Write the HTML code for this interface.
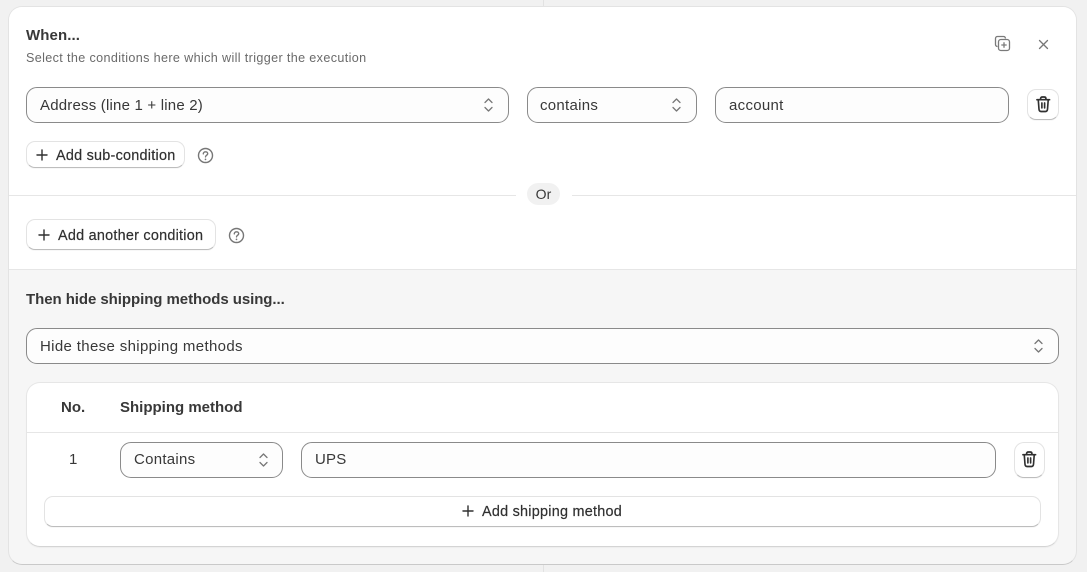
<!DOCTYPE html>
<html><head><meta charset="utf-8"><style>
*{box-sizing:border-box}
html,body{margin:0;padding:0}
body{width:1087px;height:572px;background:#f1f1f1;position:relative;overflow:hidden;font-family:"Liberation Sans",sans-serif;color:#383838;font-size:15px}
#w{position:absolute;left:0;top:0;width:1087px;height:572px;filter:blur(.35px)}
.a{position:absolute}
.t{position:absolute;white-space:nowrap;line-height:18px}
.inp{position:absolute;border:1px solid #8a8a8a;border-radius:11px;background:#fdfdfd}
.btn{position:absolute;background:#fff;border:1px solid #e3e3e3;border-bottom-color:#bdbdbd;border-radius:9px;box-shadow:0 1px 0 rgba(0,0,0,.03)}
svg{position:absolute;overflow:visible}
.b{font-weight:700;font-size:15px}
.m{font-size:14.4px;letter-spacing:.25px;-webkit-text-stroke:.2px #303030;color:#303030}
</style></head><body><div id="w">
<div class="a" style="left:543px;top:0;width:1px;height:7px;background:#e2e2e2"></div>
<div class="a" style="left:543px;top:565px;width:1px;height:7px;background:#e2e2e2"></div>

<div class="a" style="left:8px;top:6px;width:1069px;height:559px;background:#f6f6f6;border:1px solid #e3e3e3;border-bottom-color:#c9c9c9;border-radius:14px;overflow:hidden">
  <div class="a" style="left:0;top:0;width:1067px;height:263px;background:#fff;border-bottom:1px solid #e6e6e6"></div>
</div>

<div class="t b" style="left:26px;top:27px;letter-spacing:.1px">When...</div>
<div class="t" style="left:26px;top:49px;font-size:12.6px;letter-spacing:.36px;color:#6a6a6a">Select the conditions here which will trigger the execution</div>

<svg style="left:994px;top:35px" width="17" height="17" viewBox="0 0 17 17" fill="none" stroke="#7a7a7a" stroke-width="1.3"><path d="M3.5 11.5C2 11.3 1.5 10.5 1.5 9.5V3.5C1.5 2.3 2.3 1.5 3.5 1.5H9.5C10.5 1.5 11.3 2 11.5 3.5"/><rect x="4.5" y="4.5" width="11" height="11" rx="2.4"/><path d="M10 7.3V12.7M7.3 10H12.7"/></svg>
<svg style="left:1039px;top:40px" width="9" height="9" viewBox="0 0 9 9" fill="none" stroke="#777" stroke-width="1.3" stroke-linecap="round"><path d="M.5 .5L8.5 8.5M8.5 .5L.5 8.5"/></svg>

<div class="inp" style="left:26px;top:87px;width:483px;height:36px"></div>
<div class="t" style="left:40px;top:97px;letter-spacing:.2px">Address (line 1 + line 2)</div>
<svg style="left:483px;top:97px" width="11" height="16" viewBox="0 0 11 16" fill="none" stroke="#777" stroke-width="1.3" stroke-linecap="round" stroke-linejoin="round"><path d="M2 5.5L5.5 2L9 5.5M2 10.5L5.5 14L9 10.5"/></svg>

<div class="inp" style="left:527px;top:87px;width:170px;height:36px"></div>
<div class="t" style="left:540px;top:97px;letter-spacing:.28px">contains</div>
<svg style="left:671px;top:97px" width="11" height="16" viewBox="0 0 11 16" fill="none" stroke="#777" stroke-width="1.3" stroke-linecap="round" stroke-linejoin="round"><path d="M2 5.5L5.5 2L9 5.5M2 10.5L5.5 14L9 10.5"/></svg>

<div class="inp" style="left:715px;top:87px;width:294px;height:36px"></div>
<div class="t" style="left:729px;top:97px;letter-spacing:.3px">account</div>

<div class="btn" style="left:1027px;top:89px;width:32px;height:31px"></div>
<svg style="left:1036px;top:96px" width="14.5" height="16.5" viewBox="0 0 16 18" fill="none" stroke="#303030" stroke-width="1.8" stroke-linecap="round" stroke-linejoin="round"><path d="M1 4H15M5 4V3C5 1.8 5.8 1 7 1H9C10.2 1 11 1.8 11 3V4M2.5 4L3.3 14.5C3.4 16 4.2 17 5.6 17H10.4C11.8 17 12.6 16 12.7 14.5L13.5 4M6.5 7.5V13M9.5 7.5V13"/></svg>

<div class="btn" style="left:26px;top:141px;width:159px;height:27px"></div>
<svg style="left:36px;top:149px" width="12" height="12" viewBox="0 0 12 12" stroke="#303030" stroke-width="1.4" stroke-linecap="round"><path d="M6 1V11M1 6H11"/></svg>
<div class="t m" style="left:56px;top:147px">Add sub-condition</div>
<svg style="left:197px;top:147px" width="17" height="17" viewBox="0 0 17 17" fill="none" stroke="#777" stroke-width="1.4" stroke-linecap="round"><circle cx="8.5" cy="8.5" r="7"/><path d="M6.3 6.9C6.3 5.6 7.3 4.8 8.5 4.8C9.8 4.8 10.7 5.6 10.7 6.7C10.7 8.2 8.5 8.2 8.5 9.9"/><path d="M8.5 12.3V12.4" stroke-width="1.7"/></svg>

<div class="a" style="left:9px;top:195px;width:507px;height:1px;background:#e6e6e6"></div>
<div class="a" style="left:572px;top:195px;width:504px;height:1px;background:#e6e6e6"></div>
<div class="a" style="left:527px;top:183px;width:33px;height:22px;border-radius:11px;background:#f1f1f1"></div>
<div class="t" style="left:527px;top:185px;width:33px;text-align:center;font-size:14px;letter-spacing:.1px">Or</div>

<div class="btn" style="left:26px;top:219px;width:190px;height:31px"></div>
<svg style="left:38px;top:229px" width="12" height="12" viewBox="0 0 12 12" stroke="#303030" stroke-width="1.4" stroke-linecap="round"><path d="M6 1V11M1 6H11"/></svg>
<div class="t m" style="left:58px;top:227px">Add another condition</div>
<svg style="left:228px;top:227px" width="17" height="17" viewBox="0 0 17 17" fill="none" stroke="#777" stroke-width="1.4" stroke-linecap="round"><circle cx="8.5" cy="8.5" r="7"/><path d="M6.3 6.9C6.3 5.6 7.3 4.8 8.5 4.8C9.8 4.8 10.7 5.6 10.7 6.7C10.7 8.2 8.5 8.2 8.5 9.9"/><path d="M8.5 12.3V12.4" stroke-width="1.7"/></svg>

<div class="t b" style="left:26px;top:291px;letter-spacing:-.06px">Then hide shipping methods using...</div>

<div class="inp" style="left:26px;top:328px;width:1033px;height:36px"></div>
<div class="t" style="left:40px;top:338px;letter-spacing:.35px">Hide these shipping methods</div>
<svg style="left:1033px;top:338px" width="11" height="16" viewBox="0 0 11 16" fill="none" stroke="#777" stroke-width="1.3" stroke-linecap="round" stroke-linejoin="round"><path d="M2 5.5L5.5 2L9 5.5M2 10.5L5.5 14L9 10.5"/></svg>

<div class="a" style="left:26px;top:382px;width:1033px;height:165px;background:#fff;border:1px solid #e6e6e6;border-bottom-color:#d4d4d4;border-radius:14px;box-shadow:0 1px 1px rgba(0,0,0,.04)"></div>
<div class="a" style="left:27px;top:432px;width:1031px;height:1px;background:#e6e6e6"></div>
<div class="t b" style="left:61px;top:399px;">No.</div>
<div class="t b" style="left:120px;top:399px;">Shipping method</div>
<div class="t" style="left:69px;top:451px">1</div>

<div class="inp" style="left:120px;top:442px;width:163px;height:36px"></div>
<div class="t" style="left:134px;top:451px;letter-spacing:.28px">Contains</div>
<svg style="left:258px;top:452px" width="11" height="16" viewBox="0 0 11 16" fill="none" stroke="#777" stroke-width="1.3" stroke-linecap="round" stroke-linejoin="round"><path d="M2 5.5L5.5 2L9 5.5M2 10.5L5.5 14L9 10.5"/></svg>

<div class="inp" style="left:301px;top:442px;width:695px;height:36px"></div>
<div class="t" style="left:315px;top:451px;letter-spacing:.2px">UPS</div>

<div class="btn" style="left:1014px;top:442px;width:31px;height:36px;border-radius:10px"></div>
<svg style="left:1022px;top:451px" width="14.5" height="16.5" viewBox="0 0 16 18" fill="none" stroke="#303030" stroke-width="1.8" stroke-linecap="round" stroke-linejoin="round"><path d="M1 4H15M5 4V3C5 1.8 5.8 1 7 1H9C10.2 1 11 1.8 11 3V4M2.5 4L3.3 14.5C3.4 16 4.2 17 5.6 17H10.4C11.8 17 12.6 16 12.7 14.5L13.5 4M6.5 7.5V13M9.5 7.5V13"/></svg>

<div class="btn" style="left:44px;top:496px;width:997px;height:31px"></div>
<svg style="left:462px;top:505px" width="12" height="12" viewBox="0 0 12 12" stroke="#303030" stroke-width="1.4" stroke-linecap="round"><path d="M6 1V11M1 6H11"/></svg>
<div class="t m" style="left:482px;top:503px">Add shipping method</div>
</div></body></html>
